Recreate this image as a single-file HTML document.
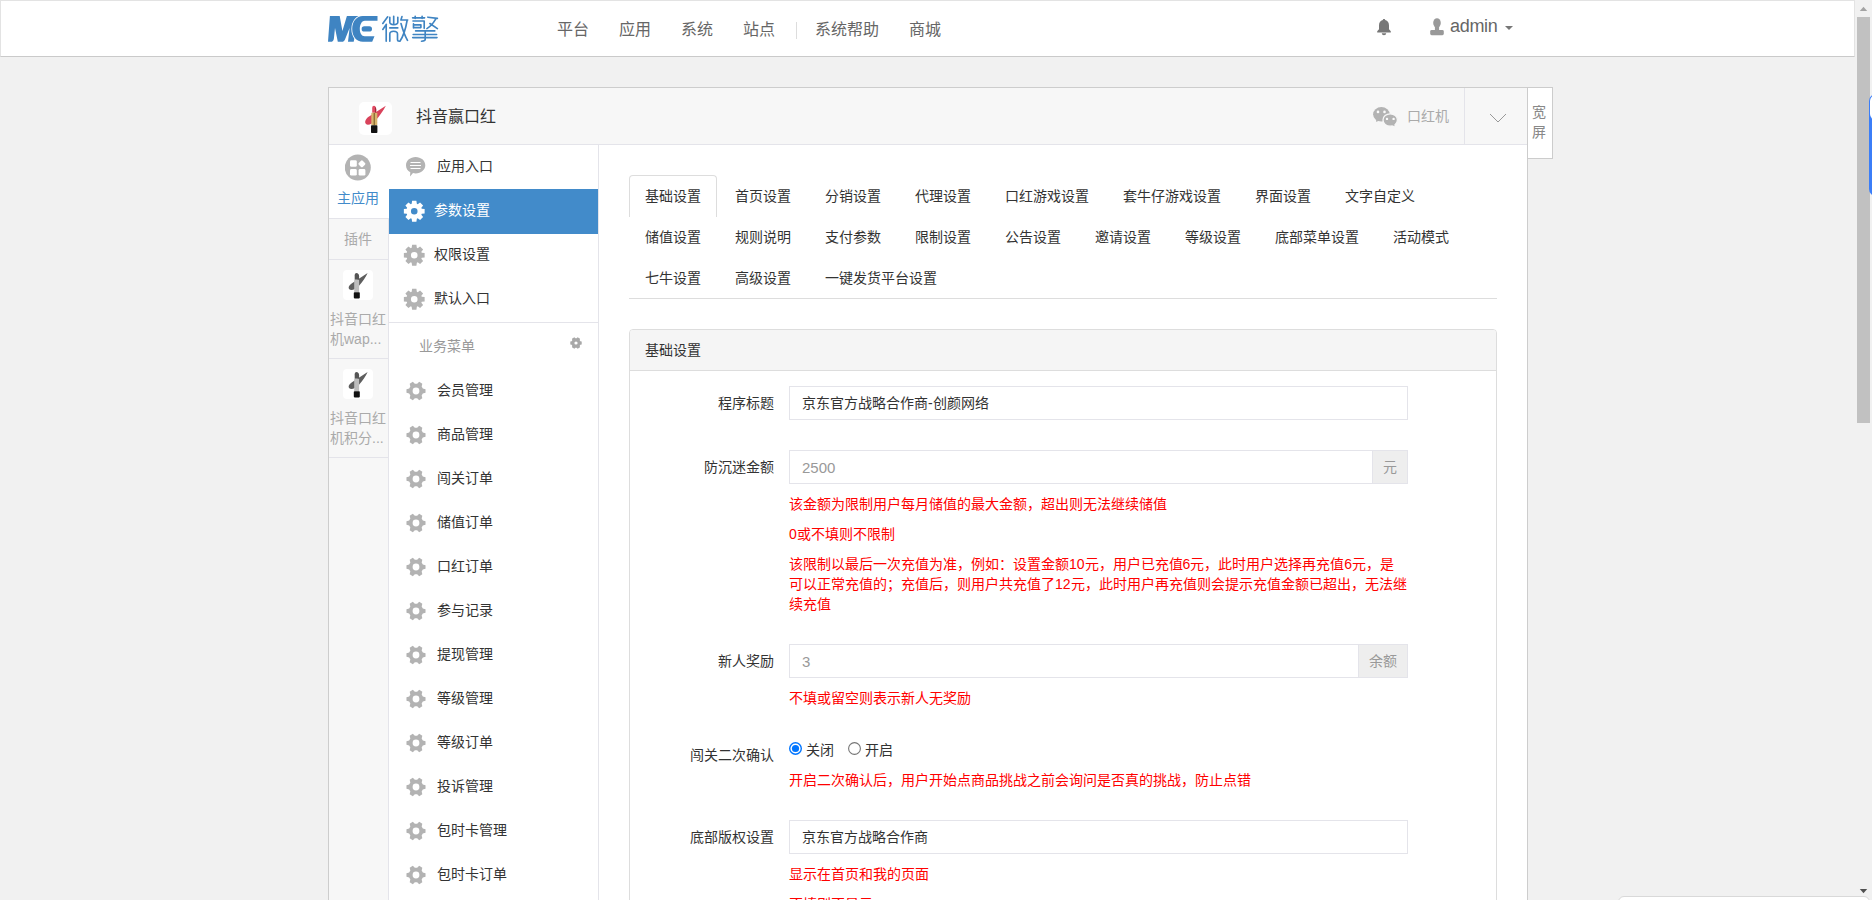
<!DOCTYPE html>
<html lang="zh-CN"><head><meta charset="utf-8">
<style>
*{box-sizing:border-box}
html,body{margin:0;padding:0}
body{width:1872px;height:900px;overflow:hidden;background:#f1f1f1;font-family:"Liberation Sans",sans-serif;font-size:14px;color:#333;position:relative}
.abs{position:absolute}
#hdr{left:0;top:0;width:1855px;height:57px;background:#fff;border:1px solid #e3e3e3;border-bottom-color:#cacaca}
.nav{top:20px;font-size:16px;line-height:20px;color:#666;white-space:nowrap}
.sb{left:1855px;top:0;width:17px;height:900px;background:#f1f1f1}
#panel{left:328px;top:87px;width:1200px;height:900px;background:#fff;border:1px solid #cdcdcd}
#phead{left:0;top:0;width:1198px;height:57px;background:#f7f7f7;border-bottom:1px solid #e4e4ea}
#lcol{left:0;top:57px;width:60px;height:900px;background:#f7f7f7;border-right:1px solid #e4e4ea}
#menu{left:60px;top:57px;width:210px;height:900px;background:#fff;border-right:1px solid #e4e4ea}
.mi{position:absolute;left:0;width:209px;height:44px;line-height:20px}
.mi .t{position:absolute;left:45px;top:12px;color:#333}
.mi svg{position:absolute}
.tab{position:absolute;line-height:20px;color:#333;white-space:nowrap}
.lbl{position:absolute;right:0;text-align:right;line-height:20px;white-space:nowrap}
.inp{position:absolute;left:789px;width:619px;height:34px;border:1px solid #e4e4ea;background:#fff;padding:0 12px;line-height:32px;color:#333}
.help{position:absolute;left:789px;color:#f00;line-height:20px;white-space:nowrap}
</style></head><body>

<!-- header -->
<div id="hdr" class="abs"></div>
<svg class="abs" style="left:328px;top:16px" width="52" height="27" viewBox="0 0 52 27"><path fill="#3f84c2" d="M0 25.8L1.9 0H11.7L14.4 14.9 18.9 0H31L25.7 25.8H20L21.6 11.9 17 23.5C16.3 25 15.3 25.8 14 25.8H9.8L7 11.9 5.9 22.4C5.6 24.6 4.5 25.8 2.7 25.8z"/><path fill="#3f84c2" stroke="#fff" stroke-width="1.6" d="M34.8 0H49.5V4.7H36.7C33.5 4.7 31.8 9 31.8 13 31.8 17 33.5 20.2 36.7 20.2H46.5L44.2 25.8H34.8C28.5 25.8 24.2 20.5 24.2 13 24.2 5.5 28.5 0 34.8 0z"/><path fill="#3f84c2" d="M34.8 0H49.5V4.7H36.7C33.5 4.7 31.8 9 31.8 13 31.8 17 33.5 20.2 36.7 20.2H46.5L44.2 25.8H34.8C28.5 25.8 24.2 20.5 24.2 13 24.2 5.5 28.5 0 34.8 0z"/><rect x="33.6" y="10.2" width="10.4" height="5.4" rx="2.7" fill="#3f84c2"/></svg>
<svg class="abs" style="left:375px;top:10px" width="70" height="36" viewBox="0 0 70 36"><g fill="none" stroke="#3f84c2" stroke-width="1.65" stroke-linecap="round" stroke-linejoin="round">
<path d="M12.7 6.8L7.8 13.5M11.4 14.3L7.8 19.4M11.2 14.8V31.2"/>
<path d="M14.8 7.2V12.3C14.8 13.8 16.5 14.6 18.8 14.6S22.8 13.8 22.8 12.3V7.2M18.7 6.3V14.2M14.8 17.9H22.8"/>
<path d="M14.8 31.2V24C14.8 22 16.5 21.2 18.6 21.2S22.5 22 22.5 24V29.5C22.5 30.6 23.3 31.2 24.3 31.2"/>
<path d="M27 6.6L25.9 10H32.7M32.1 10.5C31 17 28.5 26 24.9 31.2M26 13.5C27.5 19 30 26 32.5 30.4"/>
<path d="M37.6 7.8H49.6M40.2 6.3V8.5M47.1 6.3V8.5M38 11H49.2V18.3M38.5 13.9V18M38.6 14.8H45.9V17.6H38.6"/>
<path d="M52.9 7.2L62.4 8.4M60.8 8.9C58.5 13 55.5 16.5 51.9 18.6M54.9 13.5L62.4 18.6"/>
<path d="M40.6 20.9H59.8M38.2 24.5H61.6M37.7 27.6H62M50.2 21.1V29.6C50.2 30.7 49.2 31.2 46.5 31.2"/>
</g></svg>
<div class="abs nav" style="left:557px">平台</div>
<div class="abs nav" style="left:619px">应用</div>
<div class="abs nav" style="left:681px">系统</div>
<div class="abs nav" style="left:743px">站点</div>
<div class="abs" style="left:796px;top:22px;width:1px;height:17px;background:#ddd"></div>
<div class="abs nav" style="left:815px">系统帮助</div>
<div class="abs nav" style="left:909px">商城</div>
<svg class="abs" style="left:1376px;top:18px" width="16" height="18" viewBox="0 0 16 18"><path fill="#777" d="M8 1c.8 0 1.2.5 1.2 1.1C11.8 2.7 13 4.8 13 7.5v3.8l1.8 2v1.2H1.2v-1.2l1.8-2V7.5C3 4.8 4.2 2.7 6.8 2.1 6.8 1.5 7.2 1 8 1zM5.8 15.3h4.4C10.2 16.5 9.2 17.3 8 17.3S5.8 16.5 5.8 15.3z"/></svg>
<svg class="abs" style="left:1429px;top:18px" width="16" height="18" viewBox="0 0 16 18"><ellipse cx="8" cy="4.9" rx="3.8" ry="4.7" fill="#999"/><rect x="5.9" y="8" width="4.2" height="5" fill="#999"/><rect x="1.2" y="12" width="13.6" height="5.2" rx="1.4" fill="#999"/></svg>
<div class="abs" style="left:1450px;top:15px;font-size:18px;line-height:22px;color:#666;letter-spacing:-0.3px">admin</div>
<svg class="abs" style="left:1505px;top:26px" width="8" height="4" viewBox="0 0 8 4"><path fill="#777" d="M0 0h8L4 4z"/></svg>

<!-- fake scrollbar -->
<div class="abs sb"></div>
<svg class="abs" style="left:1859px;top:6px" width="9" height="6" viewBox="0 0 9 6"><path fill="#a3a3a3" d="M4.5 0.8L8.2 5H0.8z"/></svg>
<div class="abs" style="left:1857px;top:17px;width:13px;height:406px;background:#c1c1c1"></div>
<svg class="abs" style="left:1859px;top:888px" width="9" height="6" viewBox="0 0 9 6"><path fill="#505050" d="M0.8 1H8.2L4.5 5.2z"/></svg>
<div class="abs" style="left:1869px;top:94px;width:10px;height:102px;background:#3b7ef8;border-radius:7px 0 0 7px"></div>
<div class="abs" style="left:1870px;top:95px;width:10px;height:25px;background:#fff;border-radius:6px 0 0 6px"></div>
<div class="abs" style="left:1618px;top:896px;width:252px;height:20px;background:#fff;border:1px solid #d9d9d9;border-radius:6px"></div>


<!-- main panel -->
<div class="abs" style="left:328px;top:87px;width:1200px;height:830px;background:#fff;border:1px solid #cdcdcd"></div>
<div class="abs" style="left:329px;top:88px;width:1198px;height:57px;background:#f7f7f7;border-bottom:1px solid #e4e4ea"></div>
<div class="abs" style="left:359px;top:102px;width:33px;height:33px;background:#fff;border-radius:5px"></div>
<svg class="abs" style="left:359px;top:102px" width="33" height="33" viewBox="0 0 33 33">
<path fill="#d9435b" d="M6.8 21.8C5.2 19.8 6.8 16.6 10 14.5L26.8 3.7C24.8 8 20.5 14 16.5 18.5 13.2 22.2 8.5 23.8 6.8 21.8z"/>
<path fill="#e04a62" d="M13.2 10.8V6C13.2 4.5 14 3.7 15 3.7 16.2 3.7 17.2 5 17.2 7V10.8z"/>
<path fill="#9c2a3a" d="M16 5C16.8 5.6 17.2 6.5 17.2 7.5V10.8H16z"/>
<rect x="12.3" y="10.8" width="6" height="12.4" fill="#d7b46e"/>
<rect x="14.6" y="10.8" width="1.3" height="12.4" fill="#8a6a30"/>
<rect x="12" y="23.2" width="6.4" height="7.8" rx="0.8" fill="#111"/>
</svg>
<div class="abs" style="left:416px;top:106px;font-size:16px;line-height:22px;color:#333">抖音赢口红</div>
<svg class="abs" style="left:1368px;top:100px" width="36" height="32" viewBox="0 0 36 32"><ellipse cx="13.4" cy="14.3" rx="8.3" ry="7.3" fill="#b3b3b3"/><path d="M8 19.5L8.3 22 11 20.5z" fill="#b3b3b3"/><circle cx="10" cy="11.9" r="1.3" fill="#fafafa"/><circle cx="16.5" cy="11.9" r="1.3" fill="#fafafa"/><ellipse cx="22.2" cy="20" rx="7.2" ry="6.2" fill="#b3b3b3" stroke="#f7f7f7" stroke-width="1.3"/><path d="M24 25L26.5 26.3 26.2 23.5z" fill="#b3b3b3"/><circle cx="19" cy="18.9" r="1.2" fill="#fafafa"/><circle cx="25.6" cy="18.9" r="1.2" fill="#fafafa"/></svg>
<div class="abs" style="left:1407px;top:106px;font-size:14px;line-height:20px;color:#aaa">口红机</div>
<div class="abs" style="left:1464px;top:88px;width:1px;height:56px;background:#e4e4ea"></div>
<svg class="abs" style="left:1489px;top:113px" width="18" height="11" viewBox="0 0 18 11"><path d="M1 1l8 8 8-8" fill="none" stroke="#999" stroke-width="1"/></svg>
<div class="abs" style="left:1527px;top:87px;width:26px;height:72px;background:#fff;border:1px solid #ccc"></div>
<div class="abs" style="left:1532px;top:102px;font-size:14px;line-height:20px;color:#888;width:14px">宽屏</div>

<!-- left column -->
<div class="abs" style="left:329px;top:145px;width:60px;height:760px;background:#f7f7f7;border-right:1px solid #e4e4ea"></div>
<div class="abs" style="left:329px;top:145px;width:60px;height:74px;background:#fff;border-bottom:1px solid #e4e4ea"></div>
<svg class="abs" style="left:345px;top:154px" width="26" height="27" viewBox="0 0 26 27"><circle cx="12.8" cy="13.5" r="13" fill="#b3b3b3"/><rect x="5" y="6.2" width="6.8" height="6.6" rx="1.4" fill="#fff"/><rect x="5" y="15" width="6.8" height="6.6" rx="1.4" fill="#fff"/><rect x="13.6" y="15" width="6.8" height="6.6" rx="1.4" fill="#fff"/><rect x="14.1" y="7" width="5.6" height="5.6" rx="1.2" fill="#fff" transform="rotate(45 16.9 9.8)"/></svg>
<div class="abs" style="left:337px;top:188px;font-size:14px;line-height:20px;color:#428bca">主应用</div>
<div class="abs" style="left:329px;top:259px;width:60px;height:1px;background:#e4e4ea"></div>
<div class="abs" style="left:344px;top:229px;font-size:14px;line-height:20px;color:#aaa">插件</div>

<!-- plugins -->
<div class="abs" style="left:343px;top:270px;width:30px;height:30px;background:#fff;border-radius:4px"></div>
<svg class="abs" style="left:343px;top:270px" width="30" height="30" viewBox="0 0 30 30">
<path fill="#5e5e5e" d="M6.3 19.2C4.8 17.6 6.2 15 9 13.2L24.6 3.1C22.8 7.2 19.5 12 16 15.8 12.6 19.5 8 21 6.3 19.2z"/>
<path fill="#555" d="M11.7 9.8V5.2C11.7 3.9 12.6 3.1 13.6 3.1 14.8 3.1 16.1 4.4 16.1 6.2V9.8z"/>
<rect x="11.2" y="9.8" width="4.9" height="12.4" fill="#bdbdbd"/>
<rect x="10.8" y="22.2" width="6" height="6.2" rx="0.8" fill="#111"/>
</svg>
<div class="abs" style="left:330px;top:309px;width:58px;line-height:20px;color:#aaa">抖音口红<br>机wap...</div>
<div class="abs" style="left:329px;top:358px;width:60px;height:1px;background:#e4e4ea"></div>
<div class="abs" style="left:343px;top:369px;width:30px;height:30px;background:#fff;border-radius:4px"></div>
<svg class="abs" style="left:343px;top:369px" width="30" height="30" viewBox="0 0 30 30">
<path fill="#5e5e5e" d="M6.3 19.2C4.8 17.6 6.2 15 9 13.2L24.6 3.1C22.8 7.2 19.5 12 16 15.8 12.6 19.5 8 21 6.3 19.2z"/>
<path fill="#555" d="M11.7 9.8V5.2C11.7 3.9 12.6 3.1 13.6 3.1 14.8 3.1 16.1 4.4 16.1 6.2V9.8z"/>
<rect x="11.2" y="9.8" width="4.9" height="12.4" fill="#bdbdbd"/>
<rect x="10.8" y="22.2" width="6" height="6.2" rx="0.8" fill="#111"/>
</svg>
<div class="abs" style="left:330px;top:408px;width:58px;line-height:20px;color:#aaa">抖音口红<br>机积分...</div>
<div class="abs" style="left:329px;top:457px;width:60px;height:1px;background:#e4e4ea"></div>

<!-- menu -->
<div class="abs" style="left:389px;top:145px;width:210px;height:760px;background:#fff;border-right:1px solid #e4e4ea"></div>
<svg class="abs" style="left:405px;top:156px" width="21" height="21" viewBox="0 0 21 21"><path fill="#b3b3b3" d="M10.6 1C16 1 20.3 4.6 20.3 9.2s-4.3 8.2-9.7 8.2c-.9 0-1.8-.1-2.6-.3L5 20.6l.3-4.3C2.6 14.9 1 12.3 1 9.2 1 4.6 5.3 1 10.6 1z"/><path stroke="#fff" stroke-width="1.2" d="M5.5 6.5h10M5 9.5h11M5.5 12.5h10"/></svg>
<div class="abs" style="left:437px;top:156px;line-height:20px">应用入口</div>
<div class="abs" style="left:389px;top:189px;width:209px;height:45px;background:#428bca"></div>
<svg class="abs" style="left:402.5px;top:200px" width="22" height="22" viewBox="-0.5 -0.5 22 22"><path fill="#fff" fill-rule="evenodd" d="M18.21 8.15 L21.13 8.60 L21.13 12.90 L18.21 13.35 L17.86 14.19 L19.61 16.57 L16.57 19.61 L14.19 17.86 L13.35 18.21 L12.90 21.13 L8.60 21.13 L8.15 18.21 L7.31 17.86 L4.93 19.61 L1.89 16.57 L3.64 14.19 L3.29 13.35 L0.37 12.90 L0.37 8.60 L3.29 8.15 L3.64 7.31 L1.89 4.93 L4.93 1.89 L7.31 3.64 L8.15 3.29 L8.60 0.37 L12.90 0.37 L13.35 3.29 L14.19 3.64 L16.57 1.89 L19.61 4.93 L17.86 7.31Z M7.45 10.75 a3.30 3.30 0 1 0 6.60 0 a3.30 3.30 0 1 0 -6.60 0Z"/></svg>
<div class="abs" style="left:434px;top:200px;line-height:20px;color:#fff">参数设置</div>
<svg class="abs" style="left:402.5px;top:244px" width="22" height="22" viewBox="-0.5 -0.5 22 22"><path fill="#b3b3b3" fill-rule="evenodd" d="M18.21 8.15 L21.13 8.60 L21.13 12.90 L18.21 13.35 L17.86 14.19 L19.61 16.57 L16.57 19.61 L14.19 17.86 L13.35 18.21 L12.90 21.13 L8.60 21.13 L8.15 18.21 L7.31 17.86 L4.93 19.61 L1.89 16.57 L3.64 14.19 L3.29 13.35 L0.37 12.90 L0.37 8.60 L3.29 8.15 L3.64 7.31 L1.89 4.93 L4.93 1.89 L7.31 3.64 L8.15 3.29 L8.60 0.37 L12.90 0.37 L13.35 3.29 L14.19 3.64 L16.57 1.89 L19.61 4.93 L17.86 7.31Z M7.45 10.75 a3.30 3.30 0 1 0 6.60 0 a3.30 3.30 0 1 0 -6.60 0Z"/></svg>
<div class="abs" style="left:434px;top:244px;line-height:20px">权限设置</div>
<svg class="abs" style="left:402.5px;top:288px" width="22" height="22" viewBox="-0.5 -0.5 22 22"><path fill="#b3b3b3" fill-rule="evenodd" d="M18.21 8.15 L21.13 8.60 L21.13 12.90 L18.21 13.35 L17.86 14.19 L19.61 16.57 L16.57 19.61 L14.19 17.86 L13.35 18.21 L12.90 21.13 L8.60 21.13 L8.15 18.21 L7.31 17.86 L4.93 19.61 L1.89 16.57 L3.64 14.19 L3.29 13.35 L0.37 12.90 L0.37 8.60 L3.29 8.15 L3.64 7.31 L1.89 4.93 L4.93 1.89 L7.31 3.64 L8.15 3.29 L8.60 0.37 L12.90 0.37 L13.35 3.29 L14.19 3.64 L16.57 1.89 L19.61 4.93 L17.86 7.31Z M7.45 10.75 a3.30 3.30 0 1 0 6.60 0 a3.30 3.30 0 1 0 -6.60 0Z"/></svg>
<div class="abs" style="left:434px;top:288px;line-height:20px">默认入口</div>
<div class="abs" style="left:389px;top:322px;width:209px;height:1px;background:#e4e4ea"></div>
<div class="abs" style="left:419px;top:336px;line-height:20px;color:#999">业务菜单</div>
<svg class="abs" style="left:569.5px;top:337px" width="12" height="12" viewBox="0 0 20 20"><path fill="#a8a8a8" fill-rule="evenodd" d="M17.20 7.00 L19.53 7.70 L19.53 12.30 L17.20 13.00 L16.20 14.74 L16.75 17.10 L12.77 19.40 L11.00 17.74 L9.00 17.74 L7.23 19.40 L3.25 17.10 L3.80 14.74 L2.80 13.00 L0.47 12.30 L0.47 7.70 L2.80 7.00 L3.80 5.26 L3.25 2.90 L7.23 0.60 L9.00 2.26 L11.00 2.26 L12.77 0.60 L16.75 2.90 L16.20 5.26Z M7.30 10.00 a2.70 2.70 0 1 0 5.40 0 a2.70 2.70 0 1 0 -5.40 0Z"/></svg>
<svg class="abs" style="left:405.5px;top:381px" width="20" height="20" viewBox="0 0 20 20"><path fill="#b3b3b3" fill-rule="evenodd" d="M16.82 7.40 L19.53 8.20 L19.53 11.80 L16.82 12.60 L15.66 14.61 L16.32 17.35 L13.21 19.15 L11.16 17.21 L8.84 17.21 L6.79 19.15 L3.68 17.35 L4.34 14.61 L3.18 12.60 L0.47 11.80 L0.47 8.20 L3.18 7.40 L4.34 5.39 L3.68 2.65 L6.79 0.85 L8.84 2.79 L11.16 2.79 L13.21 0.85 L16.32 2.65 L15.66 5.39Z M6.60 10.00 a3.40 3.40 0 1 0 6.80 0 a3.40 3.40 0 1 0 -6.80 0Z"/></svg>
<div class="abs" style="left:437px;top:380px;line-height:20px">会员管理</div>
<svg class="abs" style="left:405.5px;top:425px" width="20" height="20" viewBox="0 0 20 20"><path fill="#b3b3b3" fill-rule="evenodd" d="M16.82 7.40 L19.53 8.20 L19.53 11.80 L16.82 12.60 L15.66 14.61 L16.32 17.35 L13.21 19.15 L11.16 17.21 L8.84 17.21 L6.79 19.15 L3.68 17.35 L4.34 14.61 L3.18 12.60 L0.47 11.80 L0.47 8.20 L3.18 7.40 L4.34 5.39 L3.68 2.65 L6.79 0.85 L8.84 2.79 L11.16 2.79 L13.21 0.85 L16.32 2.65 L15.66 5.39Z M6.60 10.00 a3.40 3.40 0 1 0 6.80 0 a3.40 3.40 0 1 0 -6.80 0Z"/></svg>
<div class="abs" style="left:437px;top:424px;line-height:20px">商品管理</div>
<svg class="abs" style="left:405.5px;top:469px" width="20" height="20" viewBox="0 0 20 20"><path fill="#b3b3b3" fill-rule="evenodd" d="M16.82 7.40 L19.53 8.20 L19.53 11.80 L16.82 12.60 L15.66 14.61 L16.32 17.35 L13.21 19.15 L11.16 17.21 L8.84 17.21 L6.79 19.15 L3.68 17.35 L4.34 14.61 L3.18 12.60 L0.47 11.80 L0.47 8.20 L3.18 7.40 L4.34 5.39 L3.68 2.65 L6.79 0.85 L8.84 2.79 L11.16 2.79 L13.21 0.85 L16.32 2.65 L15.66 5.39Z M6.60 10.00 a3.40 3.40 0 1 0 6.80 0 a3.40 3.40 0 1 0 -6.80 0Z"/></svg>
<div class="abs" style="left:437px;top:468px;line-height:20px">闯关订单</div>
<svg class="abs" style="left:405.5px;top:513px" width="20" height="20" viewBox="0 0 20 20"><path fill="#b3b3b3" fill-rule="evenodd" d="M16.82 7.40 L19.53 8.20 L19.53 11.80 L16.82 12.60 L15.66 14.61 L16.32 17.35 L13.21 19.15 L11.16 17.21 L8.84 17.21 L6.79 19.15 L3.68 17.35 L4.34 14.61 L3.18 12.60 L0.47 11.80 L0.47 8.20 L3.18 7.40 L4.34 5.39 L3.68 2.65 L6.79 0.85 L8.84 2.79 L11.16 2.79 L13.21 0.85 L16.32 2.65 L15.66 5.39Z M6.60 10.00 a3.40 3.40 0 1 0 6.80 0 a3.40 3.40 0 1 0 -6.80 0Z"/></svg>
<div class="abs" style="left:437px;top:512px;line-height:20px">储值订单</div>
<svg class="abs" style="left:405.5px;top:557px" width="20" height="20" viewBox="0 0 20 20"><path fill="#b3b3b3" fill-rule="evenodd" d="M16.82 7.40 L19.53 8.20 L19.53 11.80 L16.82 12.60 L15.66 14.61 L16.32 17.35 L13.21 19.15 L11.16 17.21 L8.84 17.21 L6.79 19.15 L3.68 17.35 L4.34 14.61 L3.18 12.60 L0.47 11.80 L0.47 8.20 L3.18 7.40 L4.34 5.39 L3.68 2.65 L6.79 0.85 L8.84 2.79 L11.16 2.79 L13.21 0.85 L16.32 2.65 L15.66 5.39Z M6.60 10.00 a3.40 3.40 0 1 0 6.80 0 a3.40 3.40 0 1 0 -6.80 0Z"/></svg>
<div class="abs" style="left:437px;top:556px;line-height:20px">口红订单</div>
<svg class="abs" style="left:405.5px;top:601px" width="20" height="20" viewBox="0 0 20 20"><path fill="#b3b3b3" fill-rule="evenodd" d="M16.82 7.40 L19.53 8.20 L19.53 11.80 L16.82 12.60 L15.66 14.61 L16.32 17.35 L13.21 19.15 L11.16 17.21 L8.84 17.21 L6.79 19.15 L3.68 17.35 L4.34 14.61 L3.18 12.60 L0.47 11.80 L0.47 8.20 L3.18 7.40 L4.34 5.39 L3.68 2.65 L6.79 0.85 L8.84 2.79 L11.16 2.79 L13.21 0.85 L16.32 2.65 L15.66 5.39Z M6.60 10.00 a3.40 3.40 0 1 0 6.80 0 a3.40 3.40 0 1 0 -6.80 0Z"/></svg>
<div class="abs" style="left:437px;top:600px;line-height:20px">参与记录</div>
<svg class="abs" style="left:405.5px;top:645px" width="20" height="20" viewBox="0 0 20 20"><path fill="#b3b3b3" fill-rule="evenodd" d="M16.82 7.40 L19.53 8.20 L19.53 11.80 L16.82 12.60 L15.66 14.61 L16.32 17.35 L13.21 19.15 L11.16 17.21 L8.84 17.21 L6.79 19.15 L3.68 17.35 L4.34 14.61 L3.18 12.60 L0.47 11.80 L0.47 8.20 L3.18 7.40 L4.34 5.39 L3.68 2.65 L6.79 0.85 L8.84 2.79 L11.16 2.79 L13.21 0.85 L16.32 2.65 L15.66 5.39Z M6.60 10.00 a3.40 3.40 0 1 0 6.80 0 a3.40 3.40 0 1 0 -6.80 0Z"/></svg>
<div class="abs" style="left:437px;top:644px;line-height:20px">提现管理</div>
<svg class="abs" style="left:405.5px;top:689px" width="20" height="20" viewBox="0 0 20 20"><path fill="#b3b3b3" fill-rule="evenodd" d="M16.82 7.40 L19.53 8.20 L19.53 11.80 L16.82 12.60 L15.66 14.61 L16.32 17.35 L13.21 19.15 L11.16 17.21 L8.84 17.21 L6.79 19.15 L3.68 17.35 L4.34 14.61 L3.18 12.60 L0.47 11.80 L0.47 8.20 L3.18 7.40 L4.34 5.39 L3.68 2.65 L6.79 0.85 L8.84 2.79 L11.16 2.79 L13.21 0.85 L16.32 2.65 L15.66 5.39Z M6.60 10.00 a3.40 3.40 0 1 0 6.80 0 a3.40 3.40 0 1 0 -6.80 0Z"/></svg>
<div class="abs" style="left:437px;top:688px;line-height:20px">等级管理</div>
<svg class="abs" style="left:405.5px;top:733px" width="20" height="20" viewBox="0 0 20 20"><path fill="#b3b3b3" fill-rule="evenodd" d="M16.82 7.40 L19.53 8.20 L19.53 11.80 L16.82 12.60 L15.66 14.61 L16.32 17.35 L13.21 19.15 L11.16 17.21 L8.84 17.21 L6.79 19.15 L3.68 17.35 L4.34 14.61 L3.18 12.60 L0.47 11.80 L0.47 8.20 L3.18 7.40 L4.34 5.39 L3.68 2.65 L6.79 0.85 L8.84 2.79 L11.16 2.79 L13.21 0.85 L16.32 2.65 L15.66 5.39Z M6.60 10.00 a3.40 3.40 0 1 0 6.80 0 a3.40 3.40 0 1 0 -6.80 0Z"/></svg>
<div class="abs" style="left:437px;top:732px;line-height:20px">等级订单</div>
<svg class="abs" style="left:405.5px;top:777px" width="20" height="20" viewBox="0 0 20 20"><path fill="#b3b3b3" fill-rule="evenodd" d="M16.82 7.40 L19.53 8.20 L19.53 11.80 L16.82 12.60 L15.66 14.61 L16.32 17.35 L13.21 19.15 L11.16 17.21 L8.84 17.21 L6.79 19.15 L3.68 17.35 L4.34 14.61 L3.18 12.60 L0.47 11.80 L0.47 8.20 L3.18 7.40 L4.34 5.39 L3.68 2.65 L6.79 0.85 L8.84 2.79 L11.16 2.79 L13.21 0.85 L16.32 2.65 L15.66 5.39Z M6.60 10.00 a3.40 3.40 0 1 0 6.80 0 a3.40 3.40 0 1 0 -6.80 0Z"/></svg>
<div class="abs" style="left:437px;top:776px;line-height:20px">投诉管理</div>
<svg class="abs" style="left:405.5px;top:821px" width="20" height="20" viewBox="0 0 20 20"><path fill="#b3b3b3" fill-rule="evenodd" d="M16.82 7.40 L19.53 8.20 L19.53 11.80 L16.82 12.60 L15.66 14.61 L16.32 17.35 L13.21 19.15 L11.16 17.21 L8.84 17.21 L6.79 19.15 L3.68 17.35 L4.34 14.61 L3.18 12.60 L0.47 11.80 L0.47 8.20 L3.18 7.40 L4.34 5.39 L3.68 2.65 L6.79 0.85 L8.84 2.79 L11.16 2.79 L13.21 0.85 L16.32 2.65 L15.66 5.39Z M6.60 10.00 a3.40 3.40 0 1 0 6.80 0 a3.40 3.40 0 1 0 -6.80 0Z"/></svg>
<div class="abs" style="left:437px;top:820px;line-height:20px">包时卡管理</div>
<svg class="abs" style="left:405.5px;top:865px" width="20" height="20" viewBox="0 0 20 20"><path fill="#b3b3b3" fill-rule="evenodd" d="M16.82 7.40 L19.53 8.20 L19.53 11.80 L16.82 12.60 L15.66 14.61 L16.32 17.35 L13.21 19.15 L11.16 17.21 L8.84 17.21 L6.79 19.15 L3.68 17.35 L4.34 14.61 L3.18 12.60 L0.47 11.80 L0.47 8.20 L3.18 7.40 L4.34 5.39 L3.68 2.65 L6.79 0.85 L8.84 2.79 L11.16 2.79 L13.21 0.85 L16.32 2.65 L15.66 5.39Z M6.60 10.00 a3.40 3.40 0 1 0 6.80 0 a3.40 3.40 0 1 0 -6.80 0Z"/></svg>
<div class="abs" style="left:437px;top:864px;line-height:20px">包时卡订单</div>

<!-- tabs -->
<div class="abs" style="left:629px;top:175px;width:88px;height:42px;background:#fff;border:1px solid #ddd;border-bottom:none;border-radius:4px 4px 0 0"></div>
<div class="tab" style="left:645px;top:186px">基础设置</div>
<div class="tab" style="left:735px;top:186px">首页设置</div>
<div class="tab" style="left:825px;top:186px">分销设置</div>
<div class="tab" style="left:915px;top:186px">代理设置</div>
<div class="tab" style="left:1005px;top:186px">口红游戏设置</div>
<div class="tab" style="left:1123px;top:186px">套牛仔游戏设置</div>
<div class="tab" style="left:1255px;top:186px">界面设置</div>
<div class="tab" style="left:1345px;top:186px">文字自定义</div>
<div class="tab" style="left:645px;top:227px">储值设置</div>
<div class="tab" style="left:735px;top:227px">规则说明</div>
<div class="tab" style="left:825px;top:227px">支付参数</div>
<div class="tab" style="left:915px;top:227px">限制设置</div>
<div class="tab" style="left:1005px;top:227px">公告设置</div>
<div class="tab" style="left:1095px;top:227px">邀请设置</div>
<div class="tab" style="left:1185px;top:227px">等级设置</div>
<div class="tab" style="left:1275px;top:227px">底部菜单设置</div>
<div class="tab" style="left:1393px;top:227px">活动模式</div>
<div class="tab" style="left:645px;top:268px">七牛设置</div>
<div class="tab" style="left:735px;top:268px">高级设置</div>
<div class="tab" style="left:825px;top:268px">一键发货平台设置</div>
<div class="abs" style="left:629px;top:298px;width:868px;height:1px;background:#ddd"></div>

<!-- form panel -->
<div class="abs" style="left:629px;top:329px;width:868px;height:600px;background:#fff;border:1px solid #ddd;border-radius:4px"></div>
<div class="abs" style="left:630px;top:330px;width:866px;height:41px;background:#f5f5f5;border-bottom:1px solid #ddd;border-radius:3px 3px 0 0"></div>
<div class="abs" style="left:645px;top:340px;line-height:20px;color:#333">基础设置</div>
<div class="lbl" style="left:500px;width:274px;top:393px">程序标题</div>
<div class="inp" style="top:386px">京东官方战略合作商-创颜网络</div>
<div class="lbl" style="left:500px;width:274px;top:457px">防沉迷金额</div>
<div class="inp" style="top:450px;width:584px;color:#999;font-size:15px;line-height:34px">2500</div>
<div class="abs" style="left:1372px;top:450px;width:36px;height:34px;background:#eee;border:1px solid #e4e4ea;line-height:32px;text-align:center;color:#999">元</div>
<div class="help" style="top:494px">该金额为限制用户每月储值的最大金额，超出则无法继续储值</div>
<div class="help" style="top:524px">0或不填则不限制</div>
<div class="help" style="top:554px">该限制以最后一次充值为准，例如：设置金额10元，用户已充值6元，此时用户选择再充值6元，是<br>可以正常充值的；充值后，则用户共充值了12元，此时用户再充值则会提示充值金额已超出，无法继<br>续充值</div>
<div class="lbl" style="left:500px;width:274px;top:651px">新人奖励</div>
<div class="inp" style="top:644px;width:570px;color:#999;font-size:15px;line-height:34px">3</div>
<div class="abs" style="left:1358px;top:644px;width:50px;height:34px;background:#eee;border:1px solid #e4e4ea;line-height:32px;text-align:center;color:#999">余额</div>
<div class="help" style="top:688px">不填或留空则表示新人无奖励</div>
<div class="lbl" style="left:500px;width:274px;top:745px">闯关二次确认</div>
<svg class="abs" style="left:789px;top:742px" width="13" height="13" viewBox="0 0 13 13"><circle cx="6.5" cy="6.5" r="5.8" fill="#fff" stroke="#0075ff" stroke-width="1.4"/><circle cx="6.5" cy="6.5" r="3.6" fill="#0075ff"/></svg>
<div class="abs" style="left:806px;top:740px;line-height:20px">关闭</div>
<svg class="abs" style="left:848px;top:742px" width="13" height="13" viewBox="0 0 13 13"><circle cx="6.5" cy="6.5" r="5.9" fill="#fff" stroke="#767676" stroke-width="1.1"/></svg>
<div class="abs" style="left:865px;top:740px;line-height:20px">开启</div>
<div class="help" style="top:770px">开启二次确认后，用户开始点商品挑战之前会询问是否真的挑战，防止点错</div>
<div class="lbl" style="left:500px;width:274px;top:827px">底部版权设置</div>
<div class="inp" style="top:820px">京东官方战略合作商</div>
<div class="help" style="top:864px">显示在首页和我的页面</div>
<div class="help" style="top:894px">不填则不显示</div>
</body></html>
